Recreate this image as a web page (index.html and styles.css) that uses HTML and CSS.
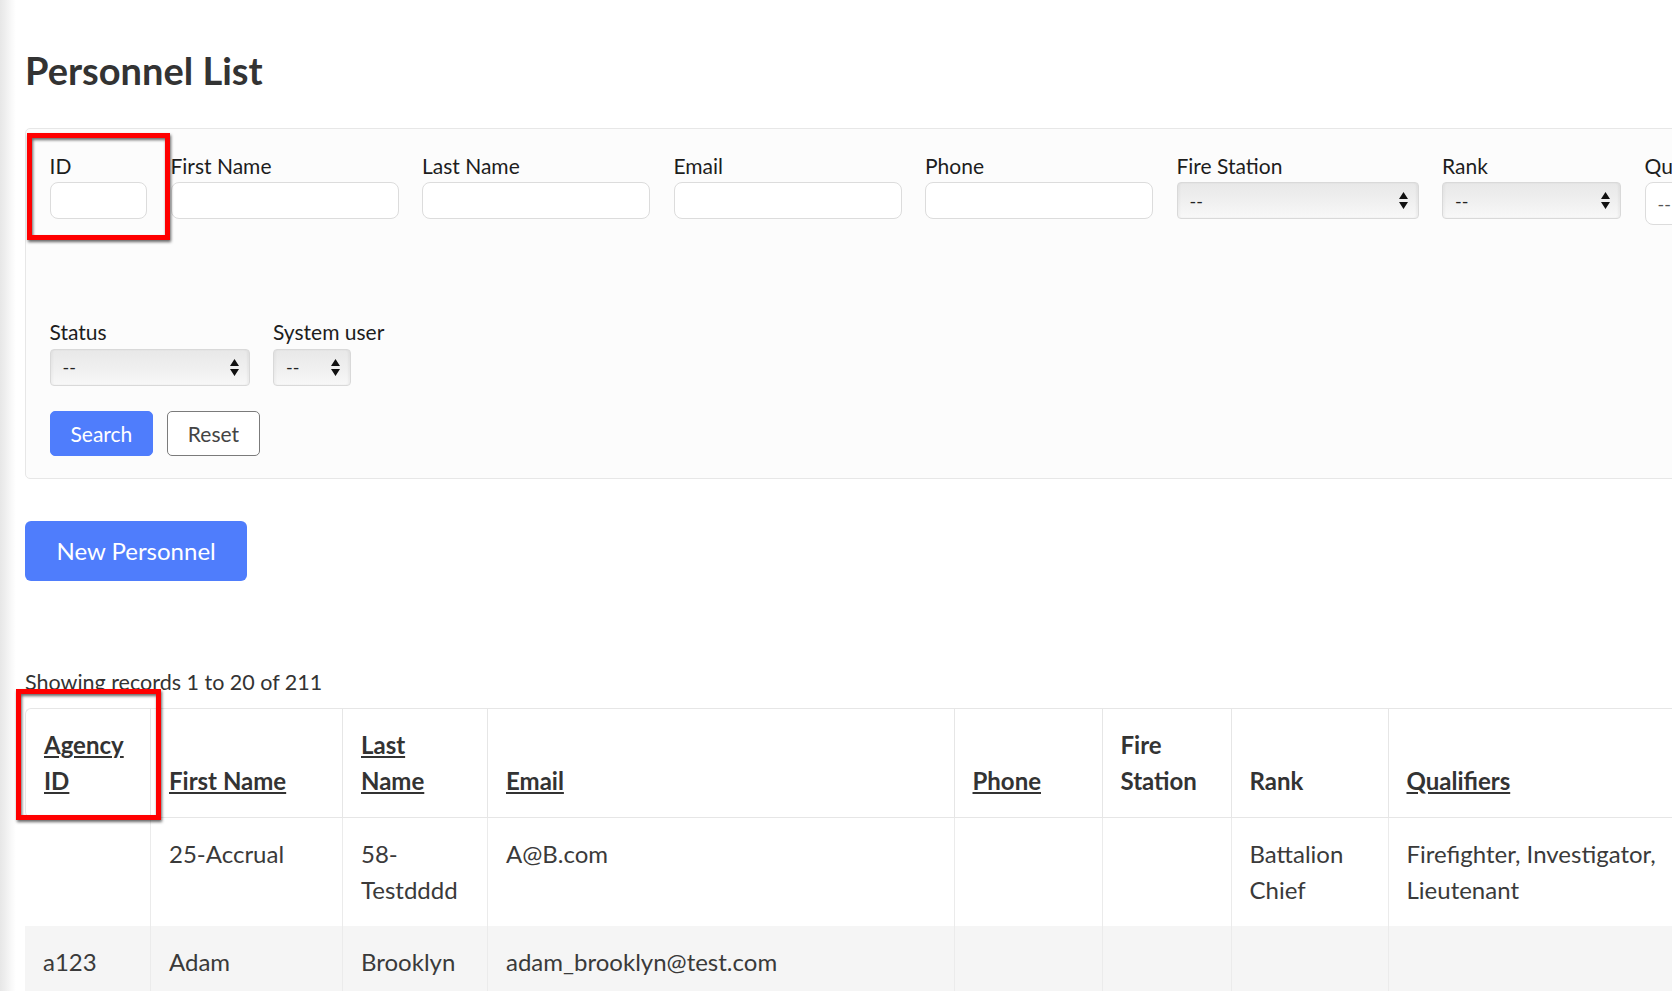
FILE: index.html
```html
<!DOCTYPE html>
<html lang="en">
<head>
<meta charset="utf-8">
<title>Personnel List</title>
<link rel="stylesheet" href="styles.css">
</head>
<body>
<main class="page">
  <h1 class="title">Personnel List</h1>

  <form class="filters">
    <div class="field-row row-main">
      <div class="field"><label>ID</label><input class="input w-id" type="text"></div>
      <div class="field"><label>First Name</label><input class="input w-text" type="text"></div>
      <div class="field"><label>Last Name</label><input class="input w-text" type="text"></div>
      <div class="field"><label>Email</label><input class="input w-text" type="text"></div>
      <div class="field"><label>Phone</label><input class="input w-text" type="text"></div>
      <div class="field"><label>Fire Station</label>
        <div class="select w-station"><span>--</span><svg class="arrows" viewBox="0 0 9 17" width="9" height="17"><path d="M0 7L4.5 0L9 7Z M0 10H9L4.5 17Z"/></svg></div>
      </div>
      <div class="field"><label>Rank</label>
        <div class="select w-rank"><span>--</span><svg class="arrows" viewBox="0 0 9 17" width="9" height="17"><path d="M0 7L4.5 0L9 7Z M0 10H9L4.5 17Z"/></svg></div>
      </div>
      <div class="field"><label>Qualifiers</label>
        <div class="multi"><span>--</span></div>
      </div>
    </div>

    <div class="field-row row-second">
      <div class="field"><label>Status</label>
        <div class="select w-status"><span>--</span><svg class="arrows" viewBox="0 0 9 17" width="9" height="17"><path d="M0 7L4.5 0L9 7Z M0 10H9L4.5 17Z"/></svg></div>
      </div>
      <div class="field"><label>System user</label>
        <div class="select w-sys"><span>--</span><svg class="arrows" viewBox="0 0 9 17" width="9" height="17"><path d="M0 7L4.5 0L9 7Z M0 10H9L4.5 17Z"/></svg></div>
      </div>
    </div>

    <div class="actions">
      <button type="button" class="btn btn-primary">Search</button>
      <button type="button" class="btn btn-outline">Reset</button>
    </div>
  </form>

  <button type="button" class="btn-new">New Personnel</button>

  <p class="records">Showing records 1 to 20 of 211</p>

  <table class="grid">
    <thead>
      <tr>
        <th class="c-agency"><a href="#">Agency ID</a></th>
        <th class="c-first"><a href="#">First Name</a></th>
        <th class="c-last"><a href="#">Last Name</a></th>
        <th class="c-email"><a href="#">Email</a></th>
        <th class="c-phone"><a href="#">Phone</a></th>
        <th class="c-station">Fire Station</th>
        <th class="c-rank">Rank</th>
        <th class="c-qual"><a href="#">Qualifiers</a></th>
      </tr>
    </thead>
    <tbody>
      <tr>
        <td></td>
        <td>25-Accrual</td>
        <td>58-Testdddd</td>
        <td>A@B.com</td>
        <td></td>
        <td></td>
        <td>Battalion Chief</td>
        <td>Firefighter, Investigator, Lieutenant</td>
      </tr>
      <tr class="alt">
        <td>a123</td>
        <td>Adam</td>
        <td>Brooklyn</td>
        <td>adam_brooklyn@test.com</td>
        <td></td>
        <td></td>
        <td></td>
        <td></td>
      </tr>
    </tbody>
  </table>

  <div class="annot annot-id"></div>
  <div class="annot annot-agency"></div>
</main>
</body>
</html>
```

FILE: styles.css
```css
html {
  overflow: hidden;
}

body {
  margin: 0;
  font-family: Lato, "Noto Sans", "Liberation Sans", sans-serif;
  color: #333;
  overflow: hidden;
  background: linear-gradient(to right, #e7e7e7 0, #eeeeee 5px, #f8f8f8 11px, #ffffff 16px);
}

.page {
  position: relative;
  width: 2300px;
  padding: 48px 0 0 25px;
}

.title {
  margin: 0 0 34px;
  font-size: 38px;
  line-height: 1.2;
  font-weight: 700;
  color: #333;
}

/* ---------- filter panel ---------- */
.filters {
  border: 1px solid #e7e7e7;
  border-radius: 5px;
  background: #fcfcfc;
  padding: 21px 24px 22px 23.5px;
}

.field-row {
  display: flex;
  align-items: flex-start;
}

.row-main {
  gap: 23.5px;
  margin-bottom: 91px;
}

.row-second {
  gap: 23px;
  margin-bottom: 25px;
}

.field label {
  display: block;
  font-size: 21px;
  line-height: 31.5px;
  margin-bottom: 1px;
  color: #1d1d1d;
  white-space: nowrap;
}

.input {
  display: block;
  box-sizing: border-box;
  height: 37px;
  margin: 0;
  border: 1px solid #dcdcdc;
  border-radius: 8px;
  background: #fff;
  font: 18px Lato, sans-serif;
  padding: 0 10px;
}

.w-id { width: 97.5px; }
.w-text { width: 228px; }
.w-station { width: 242px; }
.w-rank { width: 179px; }
.w-status { width: 200.5px; }
.w-sys { width: 78px; }

.select {
  display: flex;
  align-items: center;
  justify-content: space-between;
  box-sizing: border-box;
  height: 37px;
  padding: 0 10px 0 12px;
  border: 1px solid #d9d9d9;
  border-radius: 4px;
  background: linear-gradient(to bottom, #e8e8e8 0%, #f0f0f0 55%, #f8f8f8 100%);
  box-shadow: inset -2px 0 2px rgba(0, 0, 0, 0.04), inset 2px 0 2px rgba(0, 0, 0, 0.03);
  font-size: 18px;
  color: #222;
}

.arrows {
  flex: none;
  fill: #111;
}

.multi {
  box-sizing: border-box;
  width: 200px;
  height: 43px;
  display: flex;
  align-items: center;
  padding: 0 12px;
  border: 1px solid #dcdcdc;
  border-radius: 8px;
  background: #fff;
  font-size: 18px;
  color: #555;
}

.actions {
  display: flex;
  gap: 13.5px;
}

.btn {
  font-family: Lato, sans-serif;
  font-size: 21px;
  line-height: 31.5px;
  padding: 6px 20px;
  border-radius: 5px;
  border: 1px solid;
  margin: 0;
}

.btn-primary {
  background: #4f7dfc;
  border-color: #4f7dfc;
  color: #fff;
}

.btn-outline {
  background: #fff;
  border-color: #7b7b7b;
  color: #444;
}

.btn-new {
  display: block;
  margin: 41.5px 0 0;
  padding: 12px 31.5px;
  border: 0;
  border-radius: 6px;
  background: #4f7dfc;
  color: #fff;
  font-family: Lato, sans-serif;
  font-size: 24px;
  line-height: 36px;
}

.records {
  margin: 85px 0 9px;
  font-size: 21.5px;
  line-height: 33px;
  color: #333;
}

/* ---------- table ---------- */
.grid {
  border-collapse: separate;
  border-spacing: 0;
  table-layout: fixed;
  width: 1662.5px;
  font-size: 24px;
  line-height: 36px;
  color: #3a3a3a;
}

.grid th,
.grid td {
  box-sizing: border-box;
  padding: 18px;
  text-align: left;
}

.grid th {
  vertical-align: bottom;
  font-weight: 700;
  color: #333;
  border-top: 1px solid #e6e6e6;
  border-bottom: 1px solid #e6e6e6;
}

.grid th + th {
  border-left: 1px solid #e6e6e6;
}

.grid th:first-child {
  border-left: 1px solid #e6e6e6;
  border-top-left-radius: 6px;
  border-bottom-left-radius: 6px;
}

.grid th a {
  color: #333;
  text-decoration: underline;
}

.grid td {
  vertical-align: top;
}

.grid td + td {
  border-left: 1px solid #ebebeb;
}

.grid tr.alt td {
  background: #f5f5f5;
}

.c-agency { width: 125px; }
.c-first { width: 192px; }
.c-last { width: 145px; }
.c-email { width: 466.5px; }
.c-phone { width: 148px; }
.c-station { width: 129px; }
.c-rank { width: 157px; }
.c-qual { width: 300px; }

/* ---------- annotation overlays ---------- */
.annot {
  position: absolute;
  box-sizing: border-box;
  border: 5px solid #ff0000;
  filter: drop-shadow(1px 2px 1.5px rgba(0, 0, 0, 0.6));
  pointer-events: none;
}

.annot-id {
  left: 27px;
  top: 133px;
  width: 143px;
  height: 107px;
}

.annot-agency {
  left: 15.5px;
  top: 689px;
  width: 145.5px;
  height: 131px;
}
```
